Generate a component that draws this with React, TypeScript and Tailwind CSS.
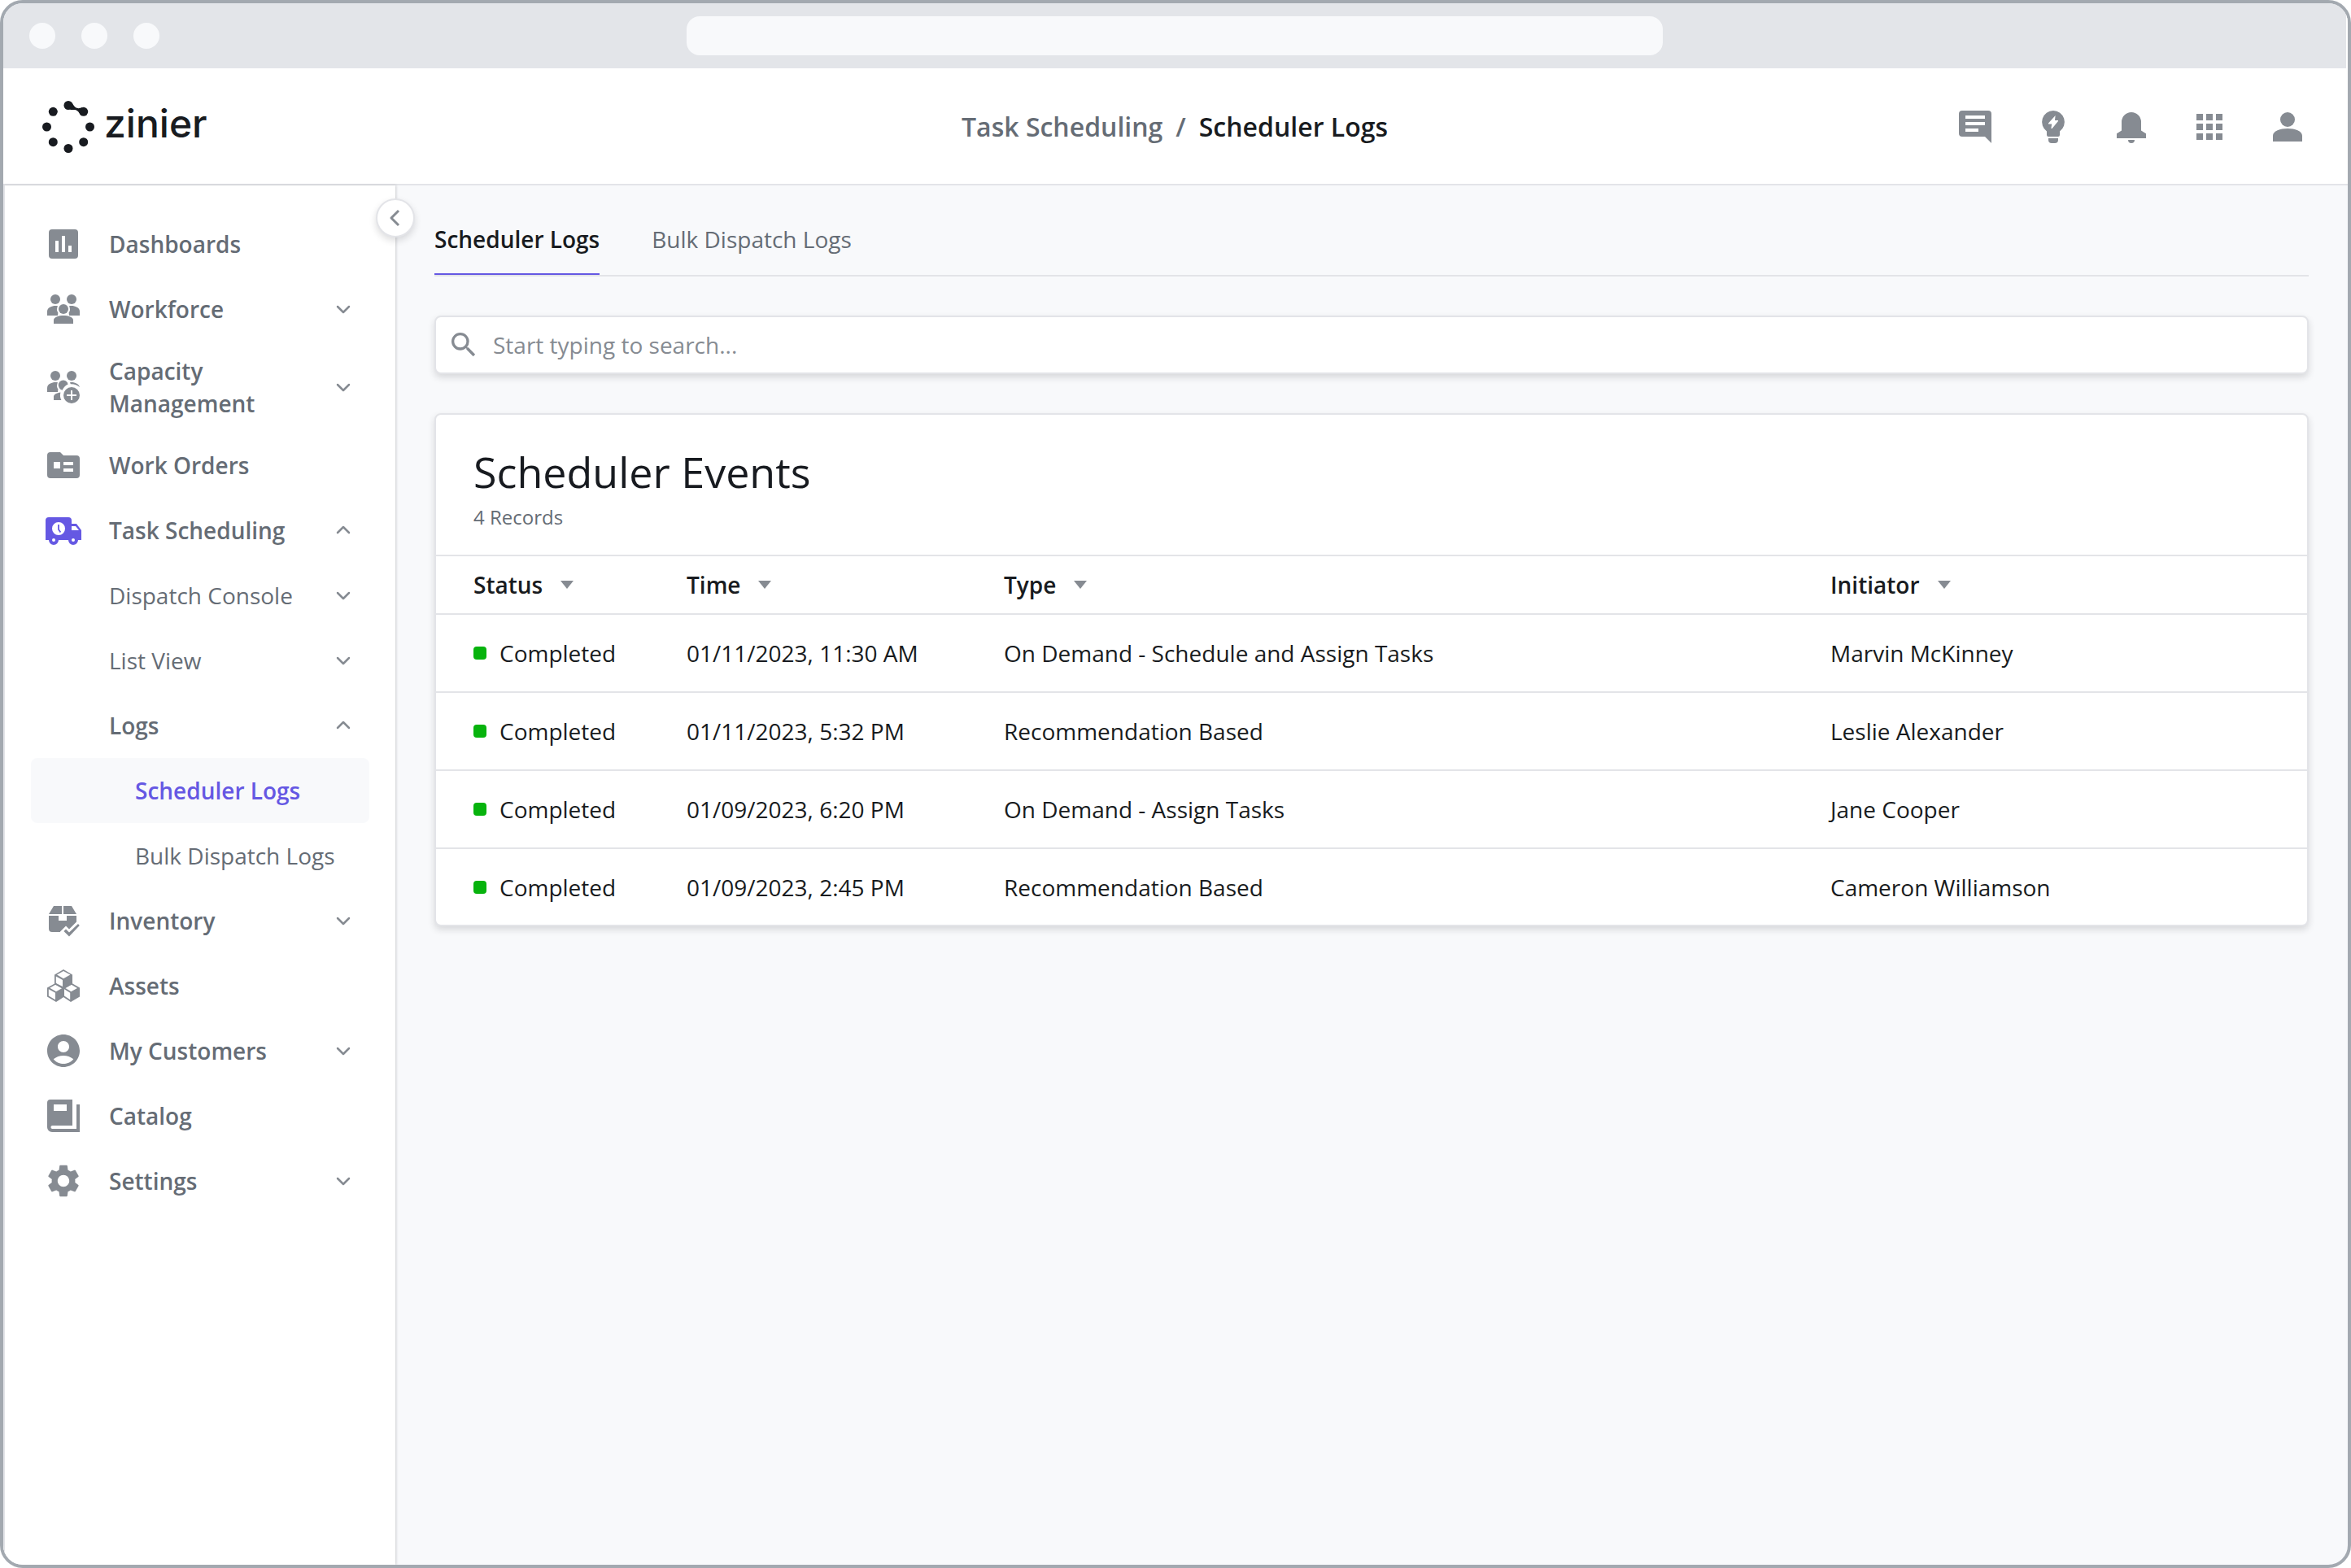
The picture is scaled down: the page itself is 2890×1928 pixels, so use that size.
import React, { useState } from 'react';
import { MdAccountCircle, MdApps, MdSearch, MdSettings } from 'react-icons/md';

type IconProps = { className?: string };

interface NavItem {
  id: string;
  label: string;
  icon?: React.ComponentType<IconProps>;
  level: 0 | 1 | 2;
  expand?: 'open' | 'closed';
  bold?: boolean;
  active?: boolean;
}

interface SchedulerEvent {
  id: number;
  status: string;
  time: string;
  type: string;
  initiator: string;
}

function Svg({ className, children }: { className?: string; children: React.ReactNode }) {
  return (
    <svg className={className} viewBox="0 0 24 24" fill="currentColor" aria-hidden="true">
      {children}
    </svg>
  );
}

function LogoMark() {
  return (
    <svg className="size-16" viewBox="0 0 64 64" fill="#181b20" aria-hidden="true">
      <circle cx="32" cy="5.5" r="5.5" />
      <circle cx="50.7" cy="13.3" r="5.5" />
      <circle cx="58.5" cy="32" r="5.5" />
      <circle cx="50.7" cy="50.7" r="5.5" />
      <circle cx="32" cy="58.5" r="5.5" />
      <circle cx="13.3" cy="50.7" r="5.5" />
      <circle cx="5.5" cy="32" r="5.5" />
      <circle cx="13.3" cy="13.3" r="5.5" />
      <path d="M36.5 2.4c2.2 3.3 3.5 5.8 6.8 6.7 2 .4 3.6-.3 5.8-1.1l-1.7 9.8c-2.2-3.3-3.5-5.8-6.9-6.7-2-.4-4 .3-6.4-.3z" />
    </svg>
  );
}

function DashboardIcon({ className }: IconProps) {
  return (
    <Svg className={className}>
      <path
        fillRule="evenodd"
        d="M5 3h14a2 2 0 0 1 2 2v14a2 2 0 0 1-2 2H5a2 2 0 0 1-2-2V5a2 2 0 0 1 2-2zm2 7v7h2v-7zm4-3v10h2V7zm4 6v4h2v-4z"
      />
    </Svg>
  );
}

function WorkforceIcon({ className }: IconProps) {
  return (
    <Svg className={className}>
      <circle cx="7" cy="6" r="3" />
      <circle cx="17" cy="6" r="3" />
      <circle cx="12" cy="12" r="3" />
      <path d="M2 16v-2.5C2 11 5 10 7 10c.5 0 1 0 1.5.1a4.2 4.2 0 0 0 .2 4.2L8.500 16zM22 16v-2.500C22 11 19 10 17 10c-.5 0-1 0-1.500.1a4.200 4.200 0 0 1-.2 4.200l.2 1.700z" />
      <path d="M6 21v-2.200C6 17 9 16 12 16s6 1 6 2.800V21z" />
    </Svg>
  );
}

function CapacityIcon({ className }: IconProps) {
  return (
    <Svg className={className}>
      <circle cx="7" cy="5" r="3" />
      <circle cx="17" cy="5" r="3" />
      <path d="M2 15v-2.500C2 10 5 9 7 9c.5 0 1 0 1.500.1a4.200 4.200 0 0 0 .2 4.200L8.500 15z" />
      <path d="M9.400 12.500a3 3 0 1 1 5.400-2.200 7 7 0 0 0-3.500 3.600 3 3 0 0 1-1.900-1.400z" />
      <path d="M16 9.100c2.600-.4 5.500.9 6 2.900-1.500-1.300-3.400-2-5.600-1.900z" />
      <path d="M6 20v-2.200c0-1.300 1.800-2.300 4.200-2.600-.4 1.600-.3 3.300.5 4.800z" />
      <path
        fillRule="evenodd"
        d="M17 12a5 5 0 1 1 0 10 5 5 0 0 1 0-10zm-.5 2v2.500H14v1h2.500V20h1v-2.500H20v-1h-2.500V14z"
      />
    </Svg>
  );
}

function WorkOrdersIcon({ className }: IconProps) {
  return (
    <Svg className={className}>
      <path
        fillRule="evenodd"
        d="M4 4h6l2 2h8a2 2 0 0 1 2 2v10a2 2 0 0 1-2 2H4a2 2 0 0 1-2-2V6a2 2 0 0 1 2-2zm2 6v4h4v-4zm6 0v2h6v-2zm0 4v2h6v-2z"
      />
    </Svg>
  );
}

function TruckIcon({ className }: IconProps) {
  return (
    <Svg className={className}>
      <path
        fillRule="evenodd"
        d="M3 4h12a2 2 0 0 1 2 2v2h3l3 4v6h-2a3 3 0 0 1-6 0H9a3 3 0 0 1-6 0H1V6a2 2 0 0 1 2-2zm6 3a4 4 0 1 0 0 8 4 4 0 0 0 0-8zm8 2.500V12h4.500l-2-2.500zM6 17a1 1 0 1 0 0 2 1 1 0 0 0 0-2zm12 0a1 1 0 1 0 0 2 1 1 0 0 0 0-2z"
      />
      <path d="M9 8.500v3l1.200 1.700" fill="none" stroke="currentColor" strokeWidth="0.9" />
    </Svg>
  );
}

function InventoryIcon({ className }: IconProps) {
  return (
    <Svg className={className}>
      <path d="M6 3h5v5H3zM12 3h5l3 5h-8z" />
      <path d="M3 9h6v3h5V9h6v3.700l-4.500 4.500-2-2L10 18.700V19H5a2 2 0 0 1-2-2z" />
      <path d="M12.200 18.500l1.300-1.300 2 2L21 14l.9 1-6.400 6.800z" />
    </Svg>
  );
}

function AssetsIcon({ className }: IconProps) {
  return (
    <Svg className={className}>
      <path
        fillRule="evenodd"
        d="M12 2l5.500 3.200V11L12 14l-5.500-3V5.200zm0 1L8 5.300l4 2.300 4.200-2.300zM7.400 6.200v4.300l4.100 2V8.500z"
      />
      <path
        fillRule="evenodd"
        d="M7.200 10.400l4.900 3V19l-4.600 3L2 18.800v-5.500zm-.1 1l-3.500 2L7.500 15.600l3.500-2zM2.900 14.100v4.200L7 20.600v-4.200z"
      />
      <path
        fillRule="evenodd"
        d="M17 10.400l5 2.900v5.500L16.500 22 12 19v-5.600zm-.1 1l-3.700 2.100 3.500 2.100 3.800-2.100zM12.500 14.100v4.200l3.600 2.300v-4.200z"
      />
    </Svg>
  );
}

function CatalogIcon({ className }: IconProps) {
  return (
    <Svg className={className}>
      <path
        fillRule="evenodd"
        d="M4 2h13.500v16H5.200a1 1 0 0 0 0 2H20V5h2v17H5a3 3 0 0 1-3-3V4a2 2 0 0 1 2-2zm2 3v4h8V5z"
      />
    </Svg>
  );
}

function CommentIcon({ className }: IconProps) {
  return (
    <Svg className={className}>
      <path
        fillRule="evenodd"
        d="M4 2h16a2 2 0 0 1 2 2v18l-4-4H4a2 2 0 0 1-2-2V4a2 2 0 0 1 2-2zm2 3v2h12V5zm0 4v2h12V9zm0 4v2h8v-2z"
      />
    </Svg>
  );
}

function BulbIcon({ className }: IconProps) {
  return (
    <Svg className={className}>
      <path
        fillRule="evenodd"
        d="M12 2a7 7 0 0 1 4 12.700V17a1 1 0 0 1-1 1H9a1 1 0 0 1-1-1v-2.300A7 7 0 0 1 12 2zm1.300 3L9 9.700v.5h2.100l-.4 2.800h.6L15 8.500V8h-2z"
      />
      <path d="M9 19h6v1a2 2 0 0 1-2 2h-2a2 2 0 0 1-2-2z" />
    </Svg>
  );
}

function BellIcon({ className }: IconProps) {
  return (
    <Svg className={className}>
      <path d="M12 3a6 6 0 0 1 6 6v5.200l3 1.900V19H3v-2.900l3-1.900V9a6 6 0 0 1 6-6zM10 20h4a2 2 0 0 1-4 0z" />
    </Svg>
  );
}

function PersonIcon({ className }: IconProps) {
  return (
    <Svg className={className}>
      <circle cx="12" cy="7.5" r="4.5" />
      <path d="M3 21v-3.500C3 14.500 7.500 13 12 13s9 1.500 9 4.500V21z" />
    </Svg>
  );
}

function Chevron({ direction }: { direction: 'up' | 'down' }) {
  return (
    <svg className="size-8 shrink-0 text-[#868b92]" viewBox="0 0 32 32" fill="none" aria-hidden="true">
      <path
        d={direction === 'down' ? 'M9 13l7 7 7-7' : 'M9 19l7-7 7 7'}
        stroke="currentColor"
        strokeWidth="2.5"
        strokeLinecap="round"
        strokeLinejoin="round"
      />
    </svg>
  );
}

const navItems: NavItem[] = [
  { id: 'dashboards', label: 'Dashboards', icon: DashboardIcon, level: 0, bold: true },
  { id: 'workforce', label: 'Workforce', icon: WorkforceIcon, level: 0, expand: 'closed', bold: true },
  { id: 'capacity', label: 'Capacity Management', icon: CapacityIcon, level: 0, expand: 'closed', bold: true },
  { id: 'work-orders', label: 'Work Orders', icon: WorkOrdersIcon, level: 0, bold: true },
  { id: 'task-scheduling', label: 'Task Scheduling', icon: TruckIcon, level: 0, expand: 'open', bold: true },
  { id: 'dispatch-console', label: 'Dispatch Console', level: 1, expand: 'closed' },
  { id: 'list-view', label: 'List View', level: 1, expand: 'closed' },
  { id: 'logs', label: 'Logs', level: 1, expand: 'open', bold: true },
  { id: 'scheduler-logs', label: 'Scheduler Logs', level: 2, bold: true, active: true },
  { id: 'bulk-dispatch-logs', label: 'Bulk Dispatch Logs', level: 2 },
  { id: 'inventory', label: 'Inventory', icon: InventoryIcon, level: 0, expand: 'closed', bold: true },
  { id: 'assets', label: 'Assets', icon: AssetsIcon, level: 0, bold: true },
  { id: 'my-customers', label: 'My Customers', icon: MdAccountCircle, level: 0, expand: 'closed', bold: true },
  { id: 'catalog', label: 'Catalog', icon: CatalogIcon, level: 0, bold: true },
  { id: 'settings', label: 'Settings', icon: MdSettings, level: 0, expand: 'closed', bold: true },
];

const headerActions = [
  { label: 'Messages', icon: CommentIcon },
  { label: 'Insights', icon: BulbIcon },
  { label: 'Notifications', icon: BellIcon },
  { label: 'Apps', icon: MdApps },
  { label: 'Profile', icon: PersonIcon },
];

const columns = [
  { label: 'Status', width: 'w-[308px]' },
  { label: 'Time', width: 'w-[390px]' },
  { label: 'Type', width: 'w-[1016px]' },
  { label: 'Initiator', width: '' },
];

const events: SchedulerEvent[] = [
  {
    id: 1,
    status: 'Completed',
    time: '01/11/2023, 11:30 AM',
    type: 'On Demand - Schedule and Assign Tasks',
    initiator: 'Marvin McKinney',
  },
  { id: 2, status: 'Completed', time: '01/11/2023, 5:32 PM', type: 'Recommendation Based', initiator: 'Leslie Alexander' },
  { id: 3, status: 'Completed', time: '01/09/2023, 6:20 PM', type: 'On Demand - Assign Tasks', initiator: 'Jane Cooper' },
  { id: 4, status: 'Completed', time: '01/09/2023, 2:45 PM', type: 'Recommendation Based', initiator: 'Cameron Williamson' },
];

const tabs = ['Scheduler Logs', 'Bulk Dispatch Logs'];

function NavLink({ item }: { item: NavItem }) {
  const Icon = item.icon;
  const indent = item.level === 0 ? 'pl-4' : item.level === 1 ? 'pl-24' : 'pl-32';
  const tone = item.active ? 'bg-[#f8f9fb] text-[#6558e3]' : 'text-[#656c75]';

  return (
    <li>
      <a
        href={`#${item.id}`}
        className={`flex min-h-20 items-center gap-8 rounded-lg py-4 pr-4 ${indent} ${tone} ${
          item.bold ? 'font-semibold' : 'font-normal'
        }`}
      >
        {Icon && (
          <Icon
            className={`size-12 shrink-0 ${item.id === 'task-scheduling' ? 'text-[#6558e3]' : 'text-[#868b92]'}`}
          />
        )}
        <span className="flex-1">{item.label}</span>
        {item.expand && <Chevron direction={item.expand === 'open' ? 'up' : 'down'} />}
      </a>
    </li>
  );
}

function Sidebar() {
  return (
    <aside className="relative w-[482px] shrink-0 border-l-2 border-[#e3e4e8] bg-white shadow-[1px_0_3px_rgba(24,27,32,0.2)]">
      <nav className="px-8 pt-8" aria-label="Main">
        <ul>
          {navItems.map((item) => (
            <NavLink key={item.id} item={item} />
          ))}
        </ul>
      </nav>
      <button
        type="button"
        aria-label="Collapse sidebar"
        className="absolute top-4 -right-6 flex size-12 items-center justify-center rounded-full border-2 border-[#e3e4e8] bg-white text-[#868b92] shadow-[0_4px_8px_rgba(24,27,32,0.15)]"
      >
        <svg className="size-8" viewBox="0 0 32 32" fill="none" aria-hidden="true">
          <path d="M20 7l-9 9 9 9" stroke="currentColor" strokeWidth="3" strokeLinejoin="round" />
        </svg>
      </button>
    </aside>
  );
}

function SchedulerEvents() {
  return (
    <section className="mt-12 overflow-hidden rounded-lg border-2 border-[#e3e4e8] bg-white shadow-[0_4px_8px_rgba(24,27,32,0.15)]">
      <div className="px-[46px] pt-[34px] pb-[26px]">
        <h1 className="text-[52px] leading-[72px]">Scheduler Events</h1>
        <p className="text-2xl leading-10 text-[#656c75]">4 Records</p>
      </div>
      <table className="w-full table-fixed text-left">
        <thead>
          <tr className="h-[72px] border-y-2 border-[#e3e4e8]">
            {columns.map((column) => (
              <th key={column.label} scope="col" className={`font-semibold first:pl-[46px] ${column.width}`}>
                <button type="button" className="flex items-center gap-[22px]">
                  {column.label}
                  <svg className="h-3 w-4" viewBox="0 0 16 12" fill="#868b92" aria-hidden="true">
                    <path d="M0 1h16l-8 10z" />
                  </svg>
                </button>
              </th>
            ))}
          </tr>
        </thead>
        <tbody>
          {events.map((event) => (
            <tr key={event.id} className="h-24 border-b-2 border-[#e3e4e8] last:h-[94px] last:border-b-0">
              <td className="pl-[46px]">
                <span className="flex items-center gap-4">
                  <span className="size-4 rounded-sm bg-[#07b30d]" />
                  {event.status}
                </span>
              </td>
              <td>{event.time}</td>
              <td>{event.type}</td>
              <td>{event.initiator}</td>
            </tr>
          ))}
        </tbody>
      </table>
    </section>
  );
}

export default function App() {
  const [activeTab, setActiveTab] = useState(tabs[0]);
  const [query, setQuery] = useState('');

  return (
    <div className="flex min-h-screen flex-col overflow-hidden rounded-[28px] border-4 border-[#a3a9b0] bg-[#f8f9fb] font-['Open_Sans','Noto_Sans',sans-serif] text-[28px] leading-10 text-[#181b20]">
      {/* Browser bar */}
      <div className="grid h-20 grid-cols-[1fr_1200px_1fr] items-center border-r-2 border-white bg-[#e3e5e9] px-8">
        <div className="flex gap-8">
          <span className="size-8 rounded-full bg-[#f8f9fb]" />
          <span className="size-8 rounded-full bg-[#f8f9fb]" />
          <span className="size-8 rounded-full bg-[#f8f9fb]" />
        </div>
        <div className="h-12 rounded-2xl bg-[#f8f9fb]" />
      </div>

      {/* Header */}
      <header className="grid h-36 grid-cols-[1fr_auto_1fr] items-center border-b-2 border-[#e3e4e8] bg-white pt-0.5 pr-[50px] pl-12">
        <a href="#home" className="flex items-center gap-3" aria-label="zinier home">
          <LogoMark />
          <span className="pb-2 font-['Inter',sans-serif] text-5xl font-medium">zinier</span>
        </a>
        <nav className="flex gap-4 text-[32px] font-semibold" aria-label="Breadcrumb">
          <a href="#task-scheduling" className="text-[#656c75]">
            Task Scheduling
          </a>
          <span className="text-[#656c75]">/</span>
          <span aria-current="page">Scheduler Logs</span>
        </nav>
        <div className="flex justify-end gap-12">
          {headerActions.map(({ label, icon: Icon }) => (
            <button key={label} type="button" aria-label={label}>
              <Icon className="size-12 text-[#868b92]" />
            </button>
          ))}
        </div>
      </header>

      <div className="flex flex-1">
        <Sidebar />

        <main className="min-w-0 flex-1 px-12">
          <div className="flex gap-16 border-b-2 border-[#e3e4e8]" role="tablist">
            {tabs.map((tab) => (
              <button
                key={tab}
                type="button"
                role="tab"
                aria-selected={tab === activeTab}
                onClick={() => setActiveTab(tab)}
                className={`border-b-2 pt-[46px] pb-[22px] ${
                  tab === activeTab ? 'border-[#6558e3] font-semibold' : 'border-transparent text-[#656c75]'
                }`}
              >
                {tab}
              </button>
            ))}
          </div>

          <div className="mt-12 flex h-[72px] items-center gap-4 rounded-lg border-2 border-[#e3e4e8] bg-white px-[14px] shadow-[0_4px_8px_rgba(24,27,32,0.15)]">
            <MdSearch className="size-10 text-[#868b92]" />
            <input
              type="search"
              aria-label="Search logs"
              value={query}
              onChange={(e) => setQuery(e.target.value)}
              placeholder="Start typing to search..."
              className="flex-1 bg-transparent outline-none placeholder:text-[#868b92]"
            />
          </div>

          <SchedulerEvents />
        </main>
      </div>
    </div>
  );
}
